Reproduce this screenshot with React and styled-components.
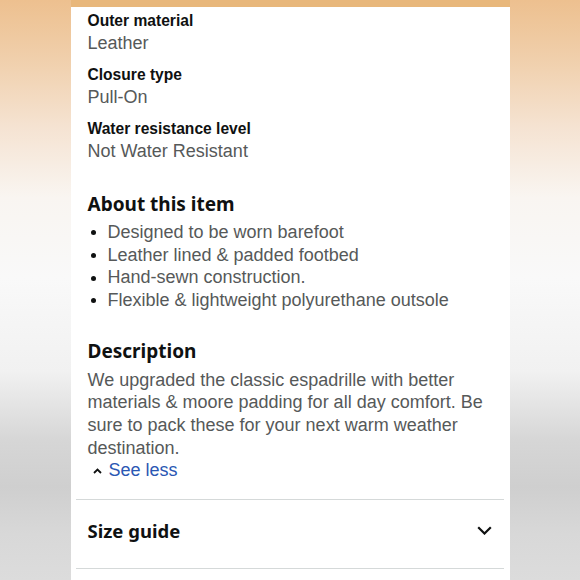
import React from "react";
import styled, { createGlobalStyle } from "styled-components";

const Global = createGlobalStyle`
  html, body { margin: 0; padding: 0; }
  body { width: 580px; height: 580px; overflow: hidden; }
`;

const Page = styled.div`
  width: 580px;
  height: 580px;
  overflow: hidden;
  display: flex;
  justify-content: center;
  background: linear-gradient(
    180deg,
    #edc08f 0%,
    #f0cfab 10%,
    #f5e3d2 22%,
    #f9f5f1 34%,
    #f9f9f9 48%,
    #f1f1f1 64%,
    #d6d6d6 76%,
    #cfcfcf 84%,
    #d8d8d8 92%,
    #dcdcdc 100%
  );
`;

const Card = styled.main`
  width: 439px;
  flex-shrink: 0;
  background: #fff;
  border-top: 7px solid #e8b77b;
  padding-top: 3px;
  font-family: "Liberation Sans", Arial, sans-serif;
  color: #0f1111;
`;

const Inner = styled.div`
  padding: 0 17px;
`;

const SpecList = styled.dl`
  margin: 0;
  display: flex;
  flex-direction: column;
  gap: 10px;
`;

const SpecItem = styled.div`
  display: flex;
  flex-direction: column;
`;

const SpecLabel = styled.dt`
  font-size: 15.6px;
  line-height: 22px;
  font-weight: 700;
  color: #0f1111;
`;

const SpecValue = styled.dd`
  margin: 0;
  font-size: 18px;
  line-height: 22px;
  color: #565959;
`;

const Section = styled.section`
  margin-top: ${(p) => p.$mt}px;
`;

const Heading = styled.h2`
  margin: 0 0 ${(p) => p.$mb || 0}px;
  font-family: "Noto Sans", "Open Sans", sans-serif;
  font-weight: 700;
  font-size: 19px;
  line-height: 24px;
  color: #0f1111;
`;

const Bullets = styled.ul`
  margin: 0;
  padding: 0;
  list-style: none;
`;

const Bullet = styled.li`
  display: flex;
  align-items: center;
  font-size: 18px;
  line-height: 22.67px;
  color: #565959;
  &::before {
    content: "";
    width: 5px;
    height: 5px;
    border-radius: 50%;
    background: #0f1111;
    margin: 1px 12px 0 3px;
    flex-shrink: 0;
  }
`;

const Paragraph = styled.p`
  margin: 0;
  font-size: 18px;
  line-height: 22.67px;
  color: #565959;
`;

const SeeLess = styled.a`
  display: flex;
  align-items: center;
  gap: 7px;
  padding-left: 5px;
  font-size: 18px;
  line-height: 22.67px;
  color: #2a57b3;
  text-decoration: none;
`;

const Divider = styled.hr`
  margin: ${(p) => p.$mt || 0}px 6px 0 5px;
  border: 0;
  border-top: 1px solid #d5d9d9;
`;

const AccordionRow = styled.div`
  display: flex;
  align-items: center;
  justify-content: space-between;
  height: 68px;
  box-sizing: border-box;
  padding: 0 18px 8px 17px;
`;

const AccordionTitle = styled.span`
  font-family: "Noto Sans", "Open Sans", sans-serif;
  font-weight: 700;
  font-size: 18.5px;
  color: #0f1111;
`;

const specs = [
  ["Outer material", "Leather"],
  ["Closure type", "Pull-On"],
  ["Water resistance level", "Not Water Resistant"],
];

const bullets = [
  "Designed to be worn barefoot",
  "Leather lined & padded footbed",
  "Hand-sewn construction.",
  "Flexible & lightweight polyurethane outsole",
];

export default function App() {
  return (
    <>
      <Global />
      <Page>
        <Card>
          <Inner>
            <SpecList>
              {specs.map(([l, v]) => (
                <SpecItem key={l}>
                  <SpecLabel>{l}</SpecLabel>
                  <SpecValue>{v}</SpecValue>
                </SpecItem>
              ))}
            </SpecList>

            <Section $mt={30}>
              <Heading $mb={5}>About this item</Heading>
              <Bullets>
                {bullets.map((b) => (
                  <Bullet key={b}>{b}</Bullet>
                ))}
              </Bullets>
            </Section>

            <Section $mt={27}>
              <Heading $mb={6}>Description</Heading>
              <Paragraph>
                We upgraded the classic espadrille with better materials &amp; moore padding for all day
                comfort. Be sure to pack these for your next warm weather destination.
              </Paragraph>
              <SeeLess href="#">
                <svg width="9" height="6" viewBox="0 0 9 6" fill="none">
                  <path d="M1 5 L4.5 1.5 L8 5" stroke="#0f1111" strokeWidth="1.8" />
                </svg>
                See less
              </SeeLess>
            </Section>
          </Inner>
          <Divider $mt={17} />
          <AccordionRow>
            <AccordionTitle>Size guide</AccordionTitle>
            <svg width="15" height="9" viewBox="0 0 15 9" fill="none">
              <path d="M1.2 1.2 L7.5 7.5 L13.8 1.2" stroke="#0f1111" strokeWidth="2.2" />
            </svg>
          </AccordionRow>
          <Divider />
        </Card>
      </Page>
    </>
  );
}
